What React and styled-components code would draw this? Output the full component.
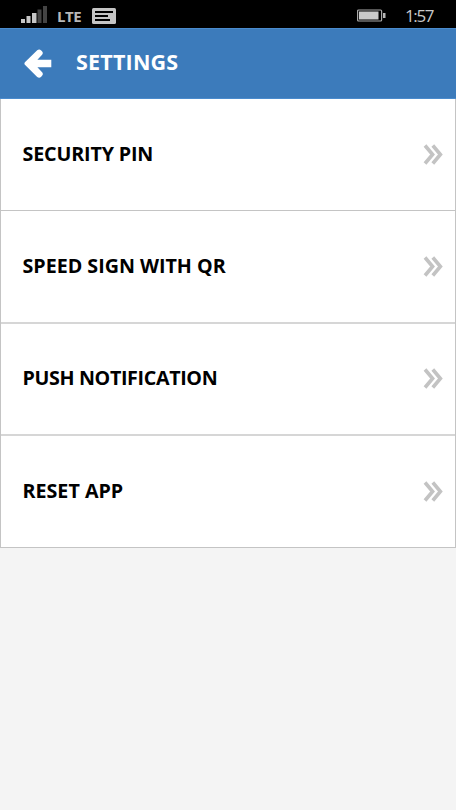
import React from "react";
import styled, { createGlobalStyle } from "styled-components";

const GlobalStyle = createGlobalStyle`
  * { box-sizing: border-box; }
  body { margin: 0; background: #f4f4f4; font-family: "Open Sans", "Noto Sans", sans-serif; }
`;

const Screen = styled.div`
  width: 456px;
  height: 810px;
  overflow: hidden;
  background: #f4f4f4;
  display: flex;
  flex-direction: column;
`;

const StatusBar = styled.div`
  height: 28px;
  flex: none;
  background: #000;
  display: flex;
  align-items: flex-start;
  padding-left: 21px;
`;

const Network = styled.span`
  width: 35px;
  padding-left: 10px;
  margin-top: 5px;
  font-size: 15px;
  line-height: 22px;
  font-weight: 700;
  letter-spacing: -0.5px;
  color: #b8b8b8;
`;

const Clock = styled.span`
  margin: 3px 0 0 19px;
  font-size: 17px;
  line-height: 25px;
  font-weight: 400;
  letter-spacing: -1.4px;
  color: #c8c8c8;
`;

const Glyph = styled.svg`
  display: block;
  flex: none;
  margin: ${(p) => p.$margin || 0};
`;

const Header = styled.header`
  height: 71px;
  flex: none;
  display: flex;
  align-items: flex-start;
  padding-left: 24px;
  background: #3c7bbb;
  border: 1px solid #4a8bcd;
  border-width: 1px 0;
`;

const Title = styled.h1`
  margin: 18px 0 0 24px;
  font-size: 21.5px;
  line-height: 30px;
  font-weight: 700;
  letter-spacing: 0.2px;
  color: #fff;
`;

const List = styled.div`
  flex: none;
  background: #fff;
  border: 1px solid #c4c4c4;
  border-top: 0;
`;

const Row = styled.div`
  height: ${(p) => p.$height}px;
  display: flex;
  align-items: flex-start;
  justify-content: space-between;
  padding: ${(p) => p.$top}px 11px 0 21.5px;
  border-bottom: ${(p) => p.$line};
`;

const Label = styled.span`
  font-size: 19.7px;
  line-height: 28px;
  font-weight: 700;
  letter-spacing: ${(p) => p.$spacing};
  white-space: nowrap;
  color: #000;
`;

const rows = [
  { label: "SECURITY PIN", height: 112, top: 41, spacing: "-0.15px", line: "1px solid #c4c4c4" },
  { label: "SPEED SIGN WITH QR", height: 113, top: 41, spacing: "-0.02px", line: "2px solid #d6d6d6" },
  { label: "PUSH NOTIFICATION", height: 112, top: 40, spacing: "-0.36px", line: "2px solid #d6d6d6" },
  { label: "RESET APP", height: 111, top: 41, spacing: "0px", line: "0" },
];

function Chevrons() {
  return (
    <Glyph width="21" height="22" viewBox="0 0 21 22" $margin="4px 0 0">
      <path d="M2 1.5 L9.6 10.5 L2 19.5 M9.8 1.5 L17.4 10.5 L9.8 19.5" fill="none" stroke="#c3c3c3" strokeWidth="3.6" />
    </Glyph>
  );
}

export default function App() {
  return (
    <Screen>
      <GlobalStyle />
      <StatusBar>
        <Glyph width="26" height="18" viewBox="0 0 26 18" $margin="6px 0 0">
          <path d="M0 13h4v4H0zM5.5 10h4v7h-4zM11 7h4.5v10H11z" fill="#c6c6c6" />
          <path d="M16.5 3.5h4V17h-4zM22 0h4v17h-4z" fill="#444" />
        </Glyph>
        <Network>LTE</Network>
        <Glyph width="24" height="16" viewBox="0 0 24 16" $margin="8px 0 0 10px">
          <rect width="24" height="16" rx="1.5" fill="#c4c4c4" />
          <path d="M3 4h18M3 8h13M3 12h15" stroke="#000" strokeWidth="2" />
        </Glyph>
        <Glyph width="29" height="13" viewBox="0 0 29 13" $margin="9px 0 0 241px">
          <rect x=".6" y="1" width="24" height="11" rx="1" fill="none" stroke="#aaa" strokeWidth="1.2" />
          <rect x="2" y="2.5" width="19.5" height="8" fill="#cacaca" />
          <path d="M26 4h2.5v5H26z" fill="#b6b6b6" />
        </Glyph>
        <Clock>1:57</Clock>
      </StatusBar>
      <Header>
        <Glyph width="28" height="30" viewBox="0 0 28 30" $margin="20px 0 0">
          <path
            d="M13.2 1.3Q15.2-.5 17.2 1.4L18 2.2Q19.6 4 18.1 5.8L13.4 10.8H27.3V18.2H13.4L18.1 23.2Q19.6 25 18 26.8L17.2 27.8Q15.2 29.5 13.2 27.9L.9 15.8Q-.1 14.5 .9 13.2Z"
            fill="#fff"
          />
        </Glyph>
        <Title>SETTINGS</Title>
      </Header>
      <List>
        {rows.map((r) => (
          <Row key={r.label} $height={r.height} $top={r.top} $line={r.line}>
            <Label $spacing={r.spacing}>{r.label}</Label>
            <Chevrons />
          </Row>
        ))}
      </List>
    </Screen>
  );
}
